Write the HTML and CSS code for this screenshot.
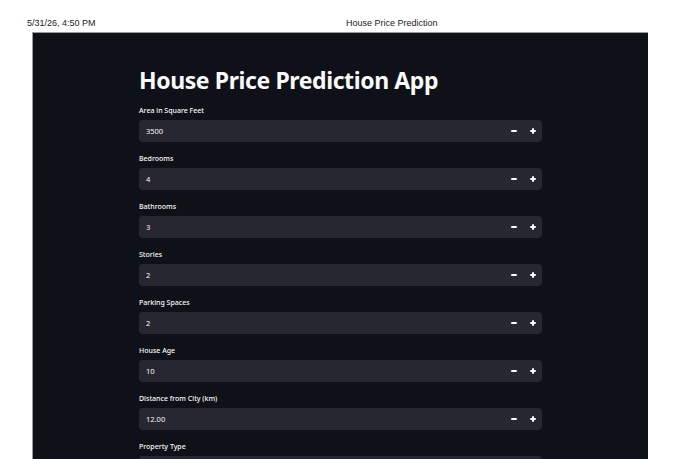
FILE: index.html
```html
<!DOCTYPE html>
<html lang="en">
<head>
    <meta charset="UTF-8">
    <meta name="viewport" content="width=device-width, initial-scale=1.0">
    <title>House Price Prediction</title>
    <!--Estilos de la pagina-->
    <link rel="stylesheet" href="styles.css">
</head>
<body>
    <!-- Cabecera de impresion -->
    <div class="print-head">
        <span class="print-date">5/31/26, 4:50 PM</span>
        <span class="print-title">House Price Prediction</span>
    </div>

    <div class="app">
        <div class="app-main">
            <h1 class="app-title">House Price Prediction App</h1>

            <div class="field">
                <label class="field-label">Area in Square Feet</label>
                <div class="number-input">
                    <span class="number-value">3500</span>
                    <button class="step step-minus"></button>
                    <button class="step step-plus"></button>
                </div>
            </div>

            <div class="field">
                <label class="field-label">Bedrooms</label>
                <div class="number-input">
                    <span class="number-value">4</span>
                    <button class="step step-minus"></button>
                    <button class="step step-plus"></button>
                </div>
            </div>

            <div class="field">
                <label class="field-label">Bathrooms</label>
                <div class="number-input">
                    <span class="number-value">3</span>
                    <button class="step step-minus"></button>
                    <button class="step step-plus"></button>
                </div>
            </div>

            <div class="field">
                <label class="field-label">Stories</label>
                <div class="number-input">
                    <span class="number-value">2</span>
                    <button class="step step-minus"></button>
                    <button class="step step-plus"></button>
                </div>
            </div>

            <div class="field">
                <label class="field-label">Parking Spaces</label>
                <div class="number-input">
                    <span class="number-value">2</span>
                    <button class="step step-minus"></button>
                    <button class="step step-plus"></button>
                </div>
            </div>

            <div class="field">
                <label class="field-label">House Age</label>
                <div class="number-input">
                    <span class="number-value">10</span>
                    <button class="step step-minus"></button>
                    <button class="step step-plus"></button>
                </div>
            </div>

            <div class="field">
                <label class="field-label">Distance from City (km)</label>
                <div class="number-input">
                    <span class="number-value">12.00</span>
                    <button class="step step-minus"></button>
                    <button class="step step-plus"></button>
                </div>
            </div>

            <div class="field">
                <label class="field-label">Property Type</label>
                <!-- selector, queda cortado por el borde de la pagina -->
                <div class="number-input"></div>
            </div>
        </div>
    </div>
</body>
</html>
```

FILE: styles.css
```css
body {
    margin: 0;
    padding: 0;
    height: 459px;
    overflow: hidden;
    background-color: #ffffff;
}
/*Cabecera de impresion*/
.print-head {
    display: flex;
    height: 32px;
    padding-left: 27px;
    padding-top: 18px;
    box-sizing: border-box;
    font-family: "Liberation Sans", Arial, sans-serif;
    font-size: 9px;
    color: #222;
}
.print-date {
    width: 319px;
}
/*Contenedor de la app*/
.app {
    margin-left: 32px;
    width: 616px;
    height: 427px;
    background-color: #0e1117;
    border-top: 1px solid #9a9a9a;
    border-left: 1px solid #9a9a9a;
    box-sizing: border-box;
    font-family: "Noto Sans", sans-serif;
    color: #fafafa;
}
.app-main {
    width: 403px;
    padding-left: 106px;
    padding-top: 29px;
}
.app-title {
    margin: 0 0 6px 0;
    font-size: 23px;
    font-weight: 700;
    line-height: 36px;
    letter-spacing: -0.4px;
}
/*Campos numericos*/
.field {
    margin-bottom: 10px;
}
.field-label {
    display: block;
    font-size: 7px;
    line-height: 14px;
    font-weight: 500;
    margin-bottom: 2px;
}
.number-input {
    display: flex;
    align-items: center;
    height: 22px;
    border-radius: 4px;
    background-color: #262730;
}
.number-value {
    flex: 1;
    padding-left: 7px;
    font-size: 7.5px;
}
.step {
    position: relative;
    width: 19px;
    height: 22px;
    border: none;
    padding: 0;
    background: transparent;
}
.step::before,
.step-plus::after {
    content: "";
    position: absolute;
    left: 7px;
    top: 10px;
    width: 6px;
    height: 2px;
    border-radius: 1px;
    background-color: #fafafa;
}
.step-plus::after {
    left: 9px;
    top: 8px;
    width: 2px;
    height: 6px;
}
```
